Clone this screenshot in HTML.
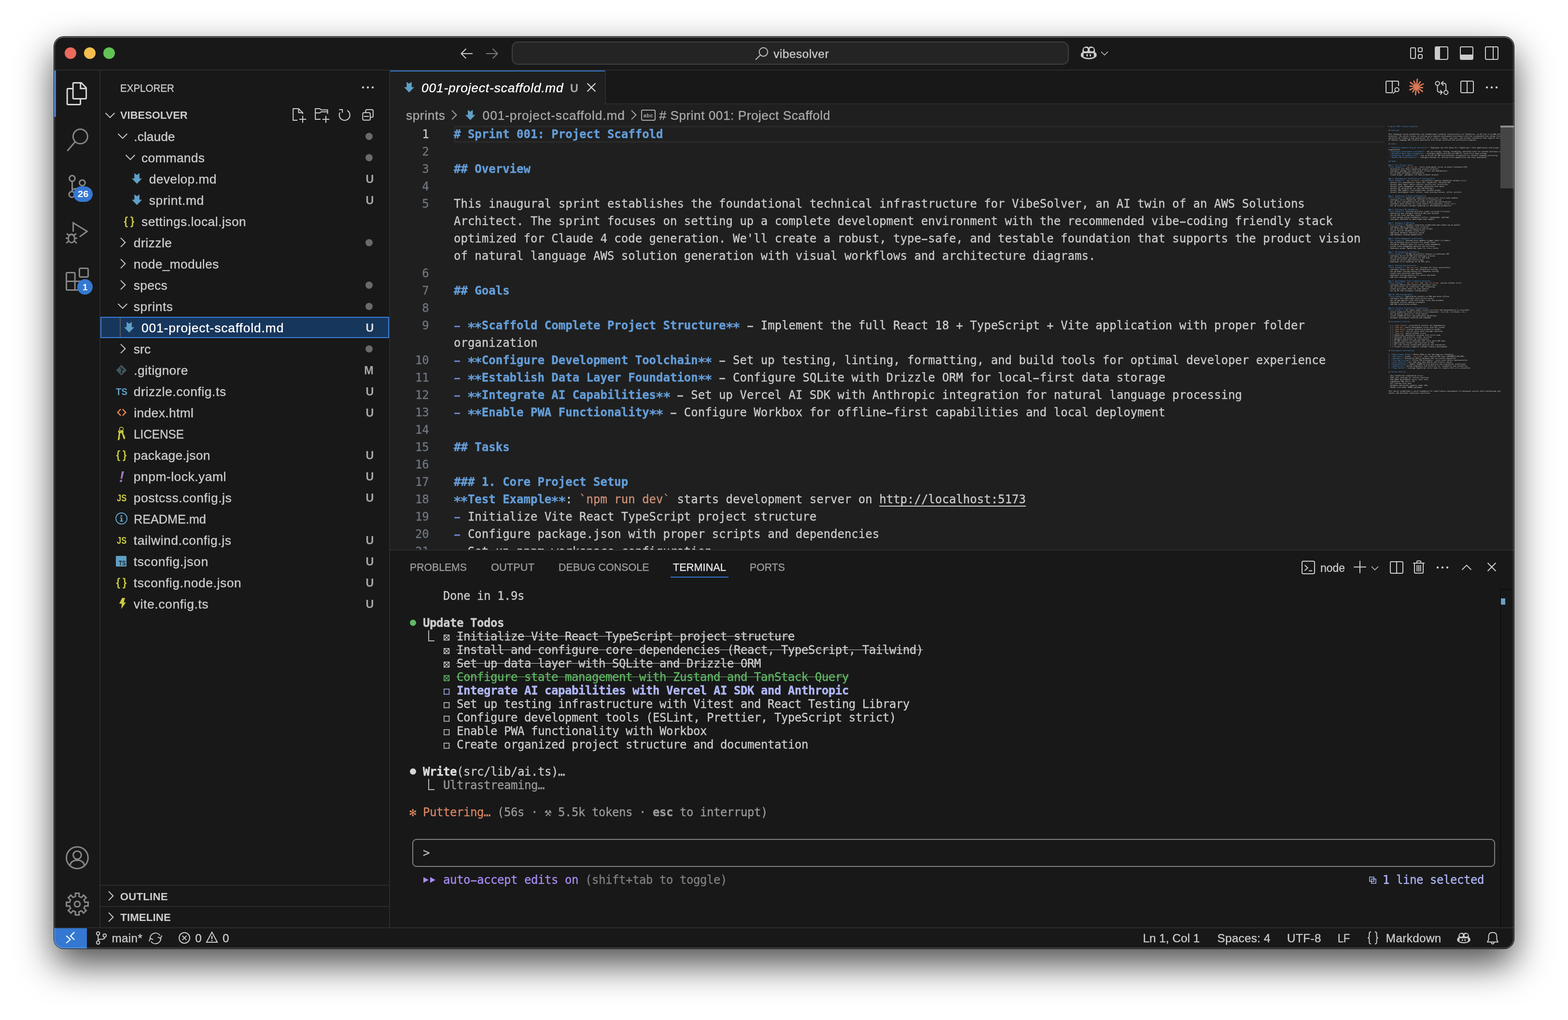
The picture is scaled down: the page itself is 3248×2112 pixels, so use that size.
<!DOCTYPE html>
<html lang="en"><head><meta charset="utf-8"><title>001-project-scaffold.md — vibesolver</title>
<style>
html,body{margin:0;padding:0;background:#fff;}
body{width:3248px;height:2112px;position:relative;overflow:hidden;}
#shadow{position:absolute;left:112px;top:76px;width:3024px;height:1888px;border-radius:20px;
  box-shadow:0 0 0 1px rgba(0,0,0,.95), 0 32px 76px 0 rgba(0,0,0,.71);}
#win{position:absolute;left:112px;top:76px;width:3024px;height:1888px;border-radius:20px;overflow:hidden;background:#181818;}
#abs{position:absolute;left:-112px;top:-76px;width:3248px;height:2112px;will-change:transform;}
#abs div,#abs span,#abs svg,#abs pre{position:absolute;}
#abs span{white-space:pre;}
#abs .rel, #abs .rel span{position:static;}
#rim{position:absolute;left:112px;top:76px;width:3024px;height:1888px;border-radius:20px;box-shadow:inset 0 0 0 2px rgba(255,255,255,.21), inset 0 2px 0 0 rgba(255,255,255,.14);pointer-events:none;}
svg{overflow:visible;}
i.hy{font-style:normal;display:inline-block;transform:scale(1.85,1.1);}
i.as{font-style:normal;display:inline-block;transform:translateY(5px) scale(1.18);-webkit-text-stroke:0.1px;}
</style></head>
<body>
<div id="shadow"></div>
<div id="win"><div id="abs">
<div style="left:112px;top:76px;width:3024px;height:1888px;background:#181818;"></div>
<div style="left:112px;top:144px;width:3024px;height:2px;background:#2b2b2b;"></div>
<div style="left:206px;top:146px;width:2px;height:1774px;background:#2b2b2b;"></div>
<div style="left:806px;top:146px;width:2px;height:1774px;background:#2b2b2b;"></div>
<div style="left:808px;top:216px;width:2328px;height:922px;background:#1f1f1f;"></div>
<div style="left:808px;top:214px;width:2328px;height:2px;background:#2b2b2b;"></div>
<div style="left:808px;top:146px;width:445px;height:70px;background:#1f1f1f;"></div>
<div style="left:808px;top:146px;width:445px;height:2px;background:#3578d2;"></div>
<div style="left:1253px;top:146px;width:2px;height:70px;background:#2b2b2b;"></div>
<div style="left:808px;top:1138px;width:2328px;height:2px;background:#2b2b2b;"></div>
<div style="left:112px;top:1920px;width:3024px;height:2px;background:#2b2b2b;"></div>
<div style="left:134px;top:98px;width:24px;height:24px;border-radius:50%;background:#ed6a5e;"></div>
<div style="left:174px;top:98px;width:24px;height:24px;border-radius:50%;background:#f5bf4f;"></div>
<div style="left:214px;top:98px;width:24px;height:24px;border-radius:50%;background:#61c554;"></div>
<svg style="left:951px;top:95px;" width="32" height="32" viewBox="0 0 16 16"><path d="M14 8 H2.4 M7.2 3 L2.2 8 L7.2 13" fill="none" stroke="#cccccc" stroke-width="1.05" stroke-linecap="butt" stroke-linejoin="miter" /></svg>
<svg style="left:1002.5px;top:95px;" width="32" height="32" viewBox="0 0 16 16"><path d="M2 8 H13.6 M8.8 3 L13.8 8 L8.8 13" fill="none" stroke="#7a7a7a" stroke-width="1.05" stroke-linecap="butt" stroke-linejoin="miter" /></svg>
<div style="left:1060px;top:86px;width:1154px;height:48px;box-sizing:border-box;border:2px solid #404040;border-radius:13px;background:#242424;"></div>
<svg style="left:1562px;top:95px;" width="32" height="32" viewBox="0 0 16 16"><circle cx="9.7" cy="6.3" r="4.4" fill="none" stroke="#c0c0c0" stroke-width="1" stroke-linecap="butt" stroke-linejoin="miter" /><path d="M6.6 9.4 L1.6 14.4" fill="none" stroke="#c0c0c0" stroke-width="1" stroke-linecap="butt" stroke-linejoin="miter" /></svg>
<span style="left:1602.30px;top:87.71px;font-family:'Liberation Sans',sans-serif;font-size:24.29px;line-height:48.58px;color:#cccccc;letter-spacing:0.569px;-webkit-text-stroke:0.35px currentColor;">vibesolver</span>
<svg style="left:2236.3px;top:90.2px;" width="38.4" height="38.4" viewBox="0 0 16 16"><path d="M1.2 9.5 Q1.2 8 2.6 7.6 Q2.2 3.2 5.4 2.7 Q7.6 2.4 8 4 Q8.4 2.4 10.6 2.7 Q13.8 3.2 13.4 7.6 Q14.8 8 14.8 9.5 V11 Q12.5 13.6 8 13.6 Q3.5 13.6 1.2 11 Z" fill="#cccccc"/><rect x="3.7" y="3.9" width="3.4" height="2.9" rx="1.2" fill="#181818"/><rect x="8.9" y="3.9" width="3.4" height="2.9" rx="1.2" fill="#181818"/><path d="M3.6 8.4 H12.4 V11.6 Q10.5 12.5 8 12.5 Q5.5 12.5 3.6 11.6 Z" fill="#181818"/><rect x="6" y="9.2" width="1.2" height="2.1" rx="0.6" fill="#cccccc"/><rect x="8.8" y="9.2" width="1.2" height="2.1" rx="0.6" fill="#cccccc"/></svg>
<svg style="left:2275.6px;top:98.2px;" width="24" height="24" viewBox="0 0 16 16"><polyline points="3.3,6 8,10.7 12.7,6" fill="none" stroke="#cccccc" stroke-width="1.0" stroke-linecap="butt" stroke-linejoin="miter" /></svg>
<svg style="left:2919px;top:94px;" width="32" height="32" viewBox="0 0 16 16"><rect x="1.5" y="2.5" width="5" height="11" rx="1" fill="none" stroke="#cccccc" stroke-width="1" stroke-linecap="butt" stroke-linejoin="miter" /><rect x="9.5" y="2.5" width="4" height="4" rx="1" fill="none" stroke="#cccccc" stroke-width="1" stroke-linecap="butt" stroke-linejoin="miter" /><rect x="9.5" y="9.5" width="4" height="4" rx="1" fill="none" stroke="#cccccc" stroke-width="1" stroke-linecap="butt" stroke-linejoin="miter" /></svg>
<svg style="left:2970px;top:94px;" width="32" height="32" viewBox="0 0 16 16"><rect x="1.5" y="1.5" width="13" height="13" rx="1.2" fill="none" stroke="#cccccc" stroke-width="1" stroke-linecap="butt" stroke-linejoin="miter" /><path d="M1.5 2.5 Q1.5 1.5 2.5 1.5 H6.5 V14.5 H2.5 Q1.5 14.5 1.5 13.5 Z" fill="#cccccc"/></svg>
<svg style="left:3022px;top:94px;" width="32" height="32" viewBox="0 0 16 16"><rect x="1.5" y="1.5" width="13" height="13" rx="1.2" fill="none" stroke="#cccccc" stroke-width="1" stroke-linecap="butt" stroke-linejoin="miter" /><path d="M1.5 9.5 H14.5 V13.5 Q14.5 14.5 13.5 14.5 H2.5 Q1.5 14.5 1.5 13.5 Z" fill="#cccccc"/></svg>
<svg style="left:3074px;top:94px;" width="32" height="32" viewBox="0 0 16 16"><rect x="1.5" y="1.5" width="13" height="13" rx="1.2" fill="none" stroke="#cccccc" stroke-width="1" stroke-linecap="butt" stroke-linejoin="miter" /><path d="M9.5 1.5 V14.5" fill="none" stroke="#cccccc" stroke-width="1" stroke-linecap="butt" stroke-linejoin="miter" /></svg>
<div style="left:112px;top:146px;width:4px;height:96px;background:#3578d2;"></div>
<svg style="left:136px;top:170px;" width="48" height="48" viewBox="0 0 24 24"><path d="M7.6 6.8 H2.6 Q1.6 6.8 1.6 7.8 V22.3 Q1.6 23.3 2.6 23.3 H14.3 Q15.3 23.3 15.3 22.3 V17.3" fill="none" stroke="#d7d7d7" stroke-width="1.5" stroke-linecap="butt" stroke-linejoin="miter" /><path d="M8.6 0.75 H16.2 L21.3 5.9 V16.3 Q21.3 17.3 20.3 17.3 H8.6 Q7.6 17.3 7.6 16.3 V1.75 Q7.6 0.75 8.6 0.75 Z" fill="none" stroke="#d7d7d7" stroke-width="1.5" stroke-linecap="butt" stroke-linejoin="miter"  stroke-linejoin="round"/><path d="M15.4 0.9 V6.6 H21.2" fill="none" stroke="#d7d7d7" stroke-width="1.5" stroke-linecap="butt" stroke-linejoin="miter" /></svg>
<svg style="left:136px;top:266px;" width="48" height="48" viewBox="0 0 24 24"><circle cx="15.2" cy="8.3" r="7.5" fill="none" stroke="#868686" stroke-width="1.5" stroke-linecap="butt" stroke-linejoin="miter" /><path d="M10 13.6 L1.7 23.2" fill="none" stroke="#868686" stroke-width="1.5" stroke-linecap="butt" stroke-linejoin="miter" /></svg>
<svg style="left:136px;top:362px;" width="48" height="48" viewBox="0 0 24 24"><circle cx="6.75" cy="3.75" r="2.95" fill="none" stroke="#868686" stroke-width="1.5" stroke-linecap="butt" stroke-linejoin="miter" /><circle cx="17.2" cy="8.3" r="2.95" fill="none" stroke="#868686" stroke-width="1.5" stroke-linecap="butt" stroke-linejoin="miter" /><circle cx="6.4" cy="20.3" r="2.95" fill="none" stroke="#868686" stroke-width="1.5" stroke-linecap="butt" stroke-linejoin="miter" /><path d="M6.75 6.7 V17.4 M17.2 11.25 Q17.2 14.4 13.5 14.4 H10 Q6.75 14.4 6.75 17.4" fill="none" stroke="#868686" stroke-width="1.5" stroke-linecap="butt" stroke-linejoin="miter" /></svg>
<svg style="left:136px;top:458px;" width="48" height="48" viewBox="0 0 24 24"><path d="M7.8 10.9 V1.7 L22.2 10.5 L14.4 16.2" fill="none" stroke="#868686" stroke-width="1.5" stroke-linecap="butt" stroke-linejoin="miter" /><ellipse cx="6" cy="18" rx="3.3" ry="4.2" fill="none" stroke="#868686" stroke-width="1.5" stroke-linecap="butt" stroke-linejoin="miter" /><path d="M3 14.6 Q6 12.4 9 14.6" fill="none" stroke="#868686" stroke-width="1.5" stroke-linecap="butt" stroke-linejoin="miter" /><path d="M2.7 17.6 H0 M9.3 17.6 H12 M3.1 20.6 L0.6 22.8 M8.9 20.6 L11.4 22.8 M3.3 14.6 L1 12.8 M8.7 14.6 L11 12.8" fill="none" stroke="#868686" stroke-width="1.5" stroke-linecap="butt" stroke-linejoin="miter" /></svg>
<svg style="left:136px;top:554px;" width="48" height="48" viewBox="0 0 24 24"><path d="M0.75 6.2 Q0.75 5.2 1.75 5.2 H8.6 Q9.6 5.2 9.6 6.2 V14.2 H18.5 Q19.5 14.2 19.5 15.2 V22.2 Q19.5 23.2 18.5 23.2 H1.75 Q0.75 23.2 0.75 22.2 Z" fill="none" stroke="#868686" stroke-width="1.5" stroke-linecap="butt" stroke-linejoin="miter" /><path d="M0.75 14.2 H9.6 V23.2" fill="none" stroke="#868686" stroke-width="1.5" stroke-linecap="butt" stroke-linejoin="miter" /><rect x="14.25" y="0.75" width="9.05" height="9.05" rx="1.3" fill="none" stroke="#868686" stroke-width="1.5" stroke-linecap="butt" stroke-linejoin="miter" /></svg>
<svg style="left:136px;top:1752px;" width="48" height="48" viewBox="0 0 24 24"><circle cx="12" cy="12" r="11.2" fill="none" stroke="#868686" stroke-width="1.5" stroke-linecap="butt" stroke-linejoin="miter" /><circle cx="12" cy="9.3" r="4.2" fill="none" stroke="#868686" stroke-width="1.5" stroke-linecap="butt" stroke-linejoin="miter" /><path d="M4.6 19.8 Q5.6 14.6 12 14.6 Q18.4 14.6 19.4 19.8" fill="none" stroke="#868686" stroke-width="1.5" stroke-linecap="butt" stroke-linejoin="miter" /></svg>
<svg style="left:136px;top:1848px;" width="48" height="48" viewBox="0 0 24 24"><path d="M10.07 0.76 L13.93 0.76 L13.83 4.01 L16.36 5.05 L18.58 2.69 L21.31 5.42 L18.95 7.64 L19.99 10.17 L23.24 10.07 L23.24 13.93 L19.99 13.83 L18.95 16.36 L21.31 18.58 L18.58 21.31 L16.36 18.95 L13.83 19.99 L13.93 23.24 L10.07 23.24 L10.17 19.99 L7.64 18.95 L5.42 21.31 L2.69 18.58 L5.05 16.36 L4.01 13.83 L0.76 13.93 L0.76 10.07 L4.01 10.17 L5.05 7.64 L2.69 5.42 L5.42 2.69 L7.64 5.05 L10.17 4.01 Z" fill="none" stroke="#868686" stroke-width="1.5" stroke-linecap="butt" stroke-linejoin="miter"  stroke-linejoin="round"/><circle cx="12" cy="12" r="2.9" fill="none" stroke="#868686" stroke-width="1.5" stroke-linecap="butt" stroke-linejoin="miter" /></svg>
<div style="left:152px;top:386px;width:40px;height:32px;border-radius:16px;background:#3578d2;"></div>
<span style="left:160.90px;top:384.30px;font-family:'Liberation Sans',sans-serif;font-size:18.4px;line-height:36.8px;color:#ffffff;font-weight:bold;transform-origin:0 0;transform:scaleX(1.0911);">26</span>
<div style="left:160px;top:578px;width:32px;height:32px;border-radius:16px;background:#3578d2;"></div>
<span style="left:171.20px;top:576.50px;font-family:'Liberation Sans',sans-serif;font-size:18.4px;line-height:36.8px;color:#ffffff;font-weight:bold;">1</span>
<span style="left:249.10px;top:160.64px;font-family:'Liberation Sans',sans-serif;font-size:22.26px;line-height:44.52px;color:#cccccc;transform-origin:0 0;transform:scaleX(0.9229);-webkit-text-stroke:0.35px currentColor;">EXPLORER</span>
<svg style="left:746px;top:165px;" width="32" height="32" viewBox="0 0 16 16"><circle cx="3" cy="8" r="1.1" fill="#cccccc"/><circle cx="8" cy="8" r="1.1" fill="#cccccc"/><circle cx="13" cy="8" r="1.1" fill="#cccccc"/></svg>
<svg style="left:212px;top:222px;" width="32" height="32" viewBox="0 0 16 16"><polyline points="3.3,6 8,10.7 12.7,6" fill="none" stroke="#cccccc" stroke-width="1" stroke-linecap="butt" stroke-linejoin="miter" /></svg>
<span style="left:249.10px;top:217.34px;font-family:'Liberation Sans',sans-serif;font-size:22.26px;line-height:44.52px;color:#cccccc;font-weight:bold;transform-origin:0 0;transform:scaleX(0.9851);">VIBESOLVER</span>
<svg style="left:604px;top:222px;" width="32" height="32" viewBox="0 0 16 16"><path d="M6 13.5 H1.6 V1.5 H7.25 L11.5 5.65 V7" fill="none" stroke="#cccccc" stroke-width="1" stroke-linecap="butt" stroke-linejoin="miter"  stroke-linejoin="round"/><path d="M7.25 1.5 V5.65 H11.5" fill="none" stroke="#cccccc" stroke-width="1" stroke-linecap="butt" stroke-linejoin="miter" /><path d="M11.5 8.9 V16.1 M7.9 12.5 H15.1" fill="none" stroke="#cccccc" stroke-width="1" stroke-linecap="butt" stroke-linejoin="miter" /></svg>
<svg style="left:650px;top:222px;" width="32" height="32" viewBox="0 0 16 16"><path d="M7 12.5 H1.6 V1.5 H6.3 L7.6 2.8 H14.3 V7" fill="none" stroke="#cccccc" stroke-width="1" stroke-linecap="butt" stroke-linejoin="miter"  stroke-linejoin="round"/><path d="M1.6 5.9 H6.3 L7.6 4.7 H14.3" fill="none" stroke="#cccccc" stroke-width="1" stroke-linecap="butt" stroke-linejoin="miter"  stroke-linejoin="round"/><path d="M12.5 8.9 V16.1 M8.9 12.5 H16.1" fill="none" stroke="#cccccc" stroke-width="1" stroke-linecap="butt" stroke-linejoin="miter" /></svg>
<svg style="left:698px;top:222px;" width="32" height="32" viewBox="0 0 16 16"><path d="M10.65 3.34 A5.5 5.5 0 1 1 3.14 5.35" fill="none" stroke="#cccccc" stroke-width="1" stroke-linecap="butt" stroke-linejoin="miter" /><path d="M2.2 2.5 H5.6 V5.8" fill="none" stroke="#cccccc" stroke-width="1" stroke-linecap="butt" stroke-linejoin="miter" /></svg>
<svg style="left:746px;top:222px;" width="32" height="32" viewBox="0 0 16 16"><rect x="5.7" y="2.5" width="7.75" height="7.9" rx="1.3" fill="none" stroke="#cccccc" stroke-width="1" stroke-linecap="butt" stroke-linejoin="miter" /><rect x="2.7" y="5.65" width="7.75" height="7.75" rx="1.3" fill="#181818" stroke="#cccccc" stroke-width="1"/><path d="M4 9.5 H9.1" fill="none" stroke="#cccccc" stroke-width="1" stroke-linecap="butt" stroke-linejoin="miter" /></svg>
<svg style="left:238px;top:265px;" width="32" height="32" viewBox="0 0 16 16"><polyline points="3.3,6 8,10.7 12.7,6" fill="none" stroke="#cccccc" stroke-width="1" stroke-linecap="butt" stroke-linejoin="miter" /></svg>
<span style="left:277.30px;top:257.49px;font-family:'Liberation Sans',sans-serif;font-size:26.31px;line-height:52.62px;color:#cccccc;letter-spacing:0.065px;-webkit-text-stroke:0.35px currentColor;">.claude</span>
<div style="left:756.5px;top:274.5px;width:15px;height:15px;border-radius:50%;background:#6a6a6a;"></div>
<svg style="left:254px;top:309px;" width="32" height="32" viewBox="0 0 16 16"><polyline points="3.3,6 8,10.7 12.7,6" fill="none" stroke="#cccccc" stroke-width="1" stroke-linecap="butt" stroke-linejoin="miter" /></svg>
<span style="left:293.00px;top:301.49px;font-family:'Liberation Sans',sans-serif;font-size:26.31px;line-height:52.62px;color:#cccccc;letter-spacing:0.330px;-webkit-text-stroke:0.35px currentColor;">commands</span>
<div style="left:756.5px;top:318.5px;width:15px;height:15px;border-radius:50%;background:#6a6a6a;"></div>
<svg style="left:272.9px;top:358.2px;" width="21.2" height="23" viewBox="0 0 22 23"><path d="M5.5 0 L11 4 L16.5 0 V11.5 H22 L11 23 L0 11.5 H5.5 Z" fill="#5f9fc6"/></svg>
<span style="left:308.80px;top:345.49px;font-family:'Liberation Sans',sans-serif;font-size:26.31px;line-height:52.62px;color:#cccccc;letter-spacing:0.389px;-webkit-text-stroke:0.35px currentColor;">develop.md</span>
<span style="left:757.60px;top:348.30px;font-family:'Liberation Sans',sans-serif;font-size:23.4px;line-height:46.8px;color:#a8a8a8;font-weight:bold;">U</span>
<svg style="left:272.9px;top:402.2px;" width="21.2" height="23" viewBox="0 0 22 23"><path d="M5.5 0 L11 4 L16.5 0 V11.5 H22 L11 23 L0 11.5 H5.5 Z" fill="#5f9fc6"/></svg>
<span style="left:308.80px;top:389.49px;font-family:'Liberation Sans',sans-serif;font-size:26.31px;line-height:52.62px;color:#cccccc;letter-spacing:0.664px;-webkit-text-stroke:0.35px currentColor;">sprint.md</span>
<span style="left:757.60px;top:392.30px;font-family:'Liberation Sans',sans-serif;font-size:23.4px;line-height:46.8px;color:#a8a8a8;font-weight:bold;">U</span>
<span style="left:257.00px;top:434.90px;font-family:'Liberation Sans',sans-serif;font-size:22.5px;line-height:45.0px;color:#cbcb41;-webkit-text-stroke:0.9px currentColor;">{</span>
<span style="left:270.40px;top:434.90px;font-family:'Liberation Sans',sans-serif;font-size:22.5px;line-height:45.0px;color:#cbcb41;-webkit-text-stroke:0.9px currentColor;">}</span>
<span style="left:293.00px;top:433.49px;font-family:'Liberation Sans',sans-serif;font-size:26.31px;line-height:52.62px;color:#cccccc;letter-spacing:0.506px;-webkit-text-stroke:0.35px currentColor;">settings.local.json</span>
<svg style="left:238px;top:486px;" width="32" height="32" viewBox="0 0 16 16"><polyline points="6,3.3 10.7,8 6,12.7" fill="none" stroke="#cccccc" stroke-width="1" stroke-linecap="butt" stroke-linejoin="miter" /></svg>
<span style="left:276.80px;top:477.49px;font-family:'Liberation Sans',sans-serif;font-size:26.31px;line-height:52.62px;color:#cccccc;letter-spacing:0.533px;-webkit-text-stroke:0.35px currentColor;">drizzle</span>
<div style="left:756.5px;top:494.5px;width:15px;height:15px;border-radius:50%;background:#6a6a6a;"></div>
<svg style="left:238px;top:530px;" width="32" height="32" viewBox="0 0 16 16"><polyline points="6,3.3 10.7,8 6,12.7" fill="none" stroke="#cccccc" stroke-width="1" stroke-linecap="butt" stroke-linejoin="miter" /></svg>
<span style="left:276.80px;top:521.49px;font-family:'Liberation Sans',sans-serif;font-size:26.31px;line-height:52.62px;color:#cccccc;letter-spacing:0.352px;-webkit-text-stroke:0.35px currentColor;">node_modules</span>
<svg style="left:238px;top:574px;" width="32" height="32" viewBox="0 0 16 16"><polyline points="6,3.3 10.7,8 6,12.7" fill="none" stroke="#cccccc" stroke-width="1" stroke-linecap="butt" stroke-linejoin="miter" /></svg>
<span style="left:276.80px;top:565.49px;font-family:'Liberation Sans',sans-serif;font-size:26.31px;line-height:52.62px;color:#cccccc;letter-spacing:0.288px;-webkit-text-stroke:0.35px currentColor;">specs</span>
<div style="left:756.5px;top:582.5px;width:15px;height:15px;border-radius:50%;background:#6a6a6a;"></div>
<svg style="left:238px;top:617px;" width="32" height="32" viewBox="0 0 16 16"><polyline points="3.3,6 8,10.7 12.7,6" fill="none" stroke="#cccccc" stroke-width="1" stroke-linecap="butt" stroke-linejoin="miter" /></svg>
<span style="left:276.80px;top:609.49px;font-family:'Liberation Sans',sans-serif;font-size:26.31px;line-height:52.62px;color:#cccccc;letter-spacing:0.617px;-webkit-text-stroke:0.35px currentColor;">sprints</span>
<div style="left:756.5px;top:626.5px;width:15px;height:15px;border-radius:50%;background:#6a6a6a;"></div>
<div style="left:208px;top:656px;width:598px;height:44px;box-sizing:border-box;background:#17365c;border:2px solid #3a7edb;"></div>
<div style="left:248px;top:658px;width:2px;height:40px;background:#5a5a5a;"></div>
<svg style="left:257.1px;top:666.2px;" width="21.2" height="23" viewBox="0 0 22 23"><path d="M5.5 0 L11 4 L16.5 0 V11.5 H22 L11 23 L0 11.5 H5.5 Z" fill="#5f9fc6"/></svg>
<span style="left:293.00px;top:653.49px;font-family:'Liberation Sans',sans-serif;font-size:26.31px;line-height:52.62px;color:#ffffff;letter-spacing:0.907px;-webkit-text-stroke:0.35px currentColor;">001-project-scaffold.md</span>
<span style="left:757.60px;top:656.30px;font-family:'Liberation Sans',sans-serif;font-size:23.4px;line-height:46.8px;color:#dcdcdc;font-weight:bold;">U</span>
<svg style="left:238px;top:706px;" width="32" height="32" viewBox="0 0 16 16"><polyline points="6,3.3 10.7,8 6,12.7" fill="none" stroke="#cccccc" stroke-width="1" stroke-linecap="butt" stroke-linejoin="miter" /></svg>
<span style="left:276.80px;top:697.49px;font-family:'Liberation Sans',sans-serif;font-size:26.31px;line-height:52.62px;color:#cccccc;letter-spacing:0.119px;-webkit-text-stroke:0.35px currentColor;">src</span>
<div style="left:756.5px;top:714.5px;width:15px;height:15px;border-radius:50%;background:#6a6a6a;"></div>
<svg style="left:240.2px;top:754.6px;" width="23" height="23" viewBox="0 0 23 23"><path d="M11.5 0.4 L22.6 11.5 L11.5 22.6 L0.4 11.5 Z" fill="#415560"/><path d="M9.4 5.6 L14 10.2 M11.6 7.8 V16.4" fill="none" stroke="#181818" stroke-width="1.5"/><circle cx="11.6" cy="16.6" r="1.7" fill="#181818"/><circle cx="14.4" cy="10.6" r="1.7" fill="#181818"/></svg>
<span style="left:277.30px;top:741.49px;font-family:'Liberation Sans',sans-serif;font-size:26.31px;line-height:52.62px;color:#cccccc;letter-spacing:0.439px;-webkit-text-stroke:0.35px currentColor;">.gitignore</span>
<span style="left:754.30px;top:744.30px;font-family:'Liberation Sans',sans-serif;font-size:23.4px;line-height:46.8px;color:#a8a8a8;font-weight:bold;">M</span>
<span style="left:239.50px;top:789.50px;font-family:'Liberation Sans',sans-serif;font-size:21px;line-height:42px;color:#5f9fc6;font-weight:bold;transform-origin:0 0;transform:scaleX(0.8914);">TS</span>
<span style="left:276.80px;top:785.49px;font-family:'Liberation Sans',sans-serif;font-size:26.31px;line-height:52.62px;color:#cccccc;letter-spacing:0.630px;-webkit-text-stroke:0.35px currentColor;">drizzle.config.ts</span>
<span style="left:757.60px;top:788.30px;font-family:'Liberation Sans',sans-serif;font-size:23.4px;line-height:46.8px;color:#a8a8a8;font-weight:bold;">U</span>
<svg style="left:241.6px;top:846px;" width="20" height="16" viewBox="0 0 20 16"><path d="M8.2 1.2 L1.7 7.9 L8.2 14.6 M11.8 1.2 L18.3 7.9 L11.8 14.6" fill="none" stroke="#e0804a" stroke-width="2.6"/></svg>
<span style="left:277.30px;top:829.49px;font-family:'Liberation Sans',sans-serif;font-size:26.31px;line-height:52.62px;color:#cccccc;letter-spacing:0.407px;-webkit-text-stroke:0.35px currentColor;">index.html</span>
<span style="left:757.60px;top:832.30px;font-family:'Liberation Sans',sans-serif;font-size:23.4px;line-height:46.8px;color:#a8a8a8;font-weight:bold;">U</span>
<svg style="left:242.7px;top:883px;" width="18" height="30" viewBox="0 0 18 30"><circle cx="8.4" cy="5.4" r="3.9" fill="none" stroke="#cbcb41" stroke-width="1.5"/><path d="M5.4 9.6 L2.6 27 M9.8 10.4 L14.4 24.8" fill="none" stroke="#cbcb41" stroke-width="3.2" stroke-linecap="round"/><circle cx="5.2" cy="10.4" r="3.5" fill="#cbcb41"/><circle cx="9.8" cy="10.8" r="3.1" fill="#cbcb41"/><circle cx="5.4" cy="9.2" r="1" fill="#181818"/><path d="M3 24.2 L6 25 M13 20.6 L15.8 19.6 M13.8 23.4 L16.4 22.4" fill="none" stroke="#cbcb41" stroke-width="1.4"/></svg>
<span style="left:277.40px;top:873.49px;font-family:'Liberation Sans',sans-serif;font-size:26.31px;line-height:52.62px;color:#cccccc;transform-origin:0 0;transform:scaleX(0.9239);-webkit-text-stroke:0.35px currentColor;">LICENSE</span>
<span style="left:241.00px;top:918.90px;font-family:'Liberation Sans',sans-serif;font-size:22.5px;line-height:45.0px;color:#cbcb41;-webkit-text-stroke:0.9px currentColor;">{</span>
<span style="left:254.40px;top:918.90px;font-family:'Liberation Sans',sans-serif;font-size:22.5px;line-height:45.0px;color:#cbcb41;-webkit-text-stroke:0.9px currentColor;">}</span>
<span style="left:276.80px;top:917.49px;font-family:'Liberation Sans',sans-serif;font-size:26.31px;line-height:52.62px;color:#cccccc;letter-spacing:0.322px;-webkit-text-stroke:0.35px currentColor;">package.json</span>
<span style="left:757.60px;top:920.30px;font-family:'Liberation Sans',sans-serif;font-size:23.4px;line-height:46.8px;color:#a8a8a8;font-weight:bold;">U</span>
<span style="left:246.70px;top:955.00px;font-family:'Liberation Sans',sans-serif;font-size:32px;line-height:64px;color:#a074c4;font-weight:bold;font-style:italic;">!</span>
<span style="left:276.80px;top:961.49px;font-family:'Liberation Sans',sans-serif;font-size:26.31px;line-height:52.62px;color:#cccccc;letter-spacing:0.570px;-webkit-text-stroke:0.35px currentColor;">pnpm-lock.yaml</span>
<span style="left:757.60px;top:964.30px;font-family:'Liberation Sans',sans-serif;font-size:23.4px;line-height:46.8px;color:#a8a8a8;font-weight:bold;">U</span>
<span style="left:241.60px;top:1010.00px;font-family:'Liberation Sans',sans-serif;font-size:20.5px;line-height:41.0px;color:#cbcb41;font-weight:bold;transform-origin:0 0;transform:scaleX(0.8020);">JS</span>
<span style="left:276.80px;top:1005.49px;font-family:'Liberation Sans',sans-serif;font-size:26.31px;line-height:52.62px;color:#cccccc;letter-spacing:0.625px;-webkit-text-stroke:0.35px currentColor;">postcss.config.js</span>
<span style="left:757.60px;top:1008.30px;font-family:'Liberation Sans',sans-serif;font-size:23.4px;line-height:46.8px;color:#a8a8a8;font-weight:bold;">U</span>
<svg style="left:239px;top:1061.2px;" width="25.2" height="25.2" viewBox="0 0 25.2 25.2"><circle cx="12.6" cy="12.6" r="11.5" fill="none" stroke="#5f9fc6" stroke-width="2"/><circle cx="12.4" cy="7.4" r="1.9" fill="#5f9fc6"/><path d="M9.4 10.8 H14.2 V17.2 H16.2 V19 H9.2 V17.2 H11.4 V12.6 H9.4 Z" fill="#5f9fc6"/></svg>
<span style="left:277.40px;top:1049.49px;font-family:'Liberation Sans',sans-serif;font-size:26.31px;line-height:52.62px;color:#cccccc;transform-origin:0 0;transform:scaleX(0.9582);-webkit-text-stroke:0.35px currentColor;">README.md</span>
<span style="left:241.60px;top:1098.00px;font-family:'Liberation Sans',sans-serif;font-size:20.5px;line-height:41.0px;color:#cbcb41;font-weight:bold;transform-origin:0 0;transform:scaleX(0.8020);">JS</span>
<span style="left:276.80px;top:1093.49px;font-family:'Liberation Sans',sans-serif;font-size:26.31px;line-height:52.62px;color:#cccccc;letter-spacing:0.626px;-webkit-text-stroke:0.35px currentColor;">tailwind.config.js</span>
<span style="left:757.60px;top:1096.30px;font-family:'Liberation Sans',sans-serif;font-size:23.4px;line-height:46.8px;color:#a8a8a8;font-weight:bold;">U</span>
<div style="left:240.4px;top:1150.7px;width:22.1px;height:22.1px;background:#5f9fc6;border-radius:1.5px;"></div>
<span style="left:245.80px;top:1152.00px;font-family:'Liberation Sans',sans-serif;font-size:14.2px;line-height:28.4px;color:#1c2730;font-weight:bold;transform-origin:0 0;transform:scaleX(0.8055);">TS</span>
<span style="left:276.80px;top:1137.49px;font-family:'Liberation Sans',sans-serif;font-size:26.31px;line-height:52.62px;color:#cccccc;letter-spacing:0.671px;-webkit-text-stroke:0.35px currentColor;">tsconfig.json</span>
<span style="left:757.60px;top:1140.30px;font-family:'Liberation Sans',sans-serif;font-size:23.4px;line-height:46.8px;color:#a8a8a8;font-weight:bold;">U</span>
<span style="left:241.00px;top:1182.90px;font-family:'Liberation Sans',sans-serif;font-size:22.5px;line-height:45.0px;color:#cbcb41;-webkit-text-stroke:0.9px currentColor;">{</span>
<span style="left:254.40px;top:1182.90px;font-family:'Liberation Sans',sans-serif;font-size:22.5px;line-height:45.0px;color:#cbcb41;-webkit-text-stroke:0.9px currentColor;">}</span>
<span style="left:276.80px;top:1181.49px;font-family:'Liberation Sans',sans-serif;font-size:26.31px;line-height:52.62px;color:#cccccc;letter-spacing:0.638px;-webkit-text-stroke:0.35px currentColor;">tsconfig.node.json</span>
<span style="left:757.60px;top:1184.30px;font-family:'Liberation Sans',sans-serif;font-size:23.4px;line-height:46.8px;color:#a8a8a8;font-weight:bold;">U</span>
<svg style="left:246.7px;top:1237.5px;" width="13.6" height="23" viewBox="0 0 13.6 23"><path d="M6 0 L12 0 L9.4 9.4 L13.6 9.4 L4.3 23 L5.1 12 L0 12 Z" fill="#cbcb41"/></svg>
<span style="left:276.80px;top:1225.49px;font-family:'Liberation Sans',sans-serif;font-size:26.31px;line-height:52.62px;color:#cccccc;letter-spacing:0.658px;-webkit-text-stroke:0.35px currentColor;">vite.config.ts</span>
<span style="left:757.60px;top:1228.30px;font-family:'Liberation Sans',sans-serif;font-size:23.4px;line-height:46.8px;color:#a8a8a8;font-weight:bold;">U</span>
<div style="left:208px;top:1832px;width:598px;height:2px;background:#2b2b2b;"></div>
<svg style="left:212.5px;top:1839px;" width="32" height="32" viewBox="0 0 16 16"><polyline points="6,3.3 10.7,8 6,12.7" fill="none" stroke="#cccccc" stroke-width="1" stroke-linecap="butt" stroke-linejoin="miter" /></svg>
<span style="left:248.70px;top:1834.64px;font-family:'Liberation Sans',sans-serif;font-size:22.26px;line-height:44.52px;color:#cccccc;font-weight:bold;letter-spacing:0.202px;">OUTLINE</span>
<div style="left:208px;top:1876px;width:598px;height:2px;background:#2b2b2b;"></div>
<svg style="left:212.5px;top:1883px;" width="32" height="32" viewBox="0 0 16 16"><polyline points="6,3.3 10.7,8 6,12.7" fill="none" stroke="#cccccc" stroke-width="1" stroke-linecap="butt" stroke-linejoin="miter" /></svg>
<span style="left:249.20px;top:1878.24px;font-family:'Liberation Sans',sans-serif;font-size:22.26px;line-height:44.52px;color:#cccccc;font-weight:bold;letter-spacing:0.104px;">TIMELINE</span>
<svg style="left:836.8px;top:169.2px;" width="21" height="22.8" viewBox="0 0 22 23"><path d="M5.5 0 L11 4 L16.5 0 V11.5 H22 L11 23 L0 11.5 H5.5 Z" fill="#5f9fc6"/></svg>
<span style="left:873.00px;top:156.09px;font-family:'Liberation Sans',sans-serif;font-size:26.31px;line-height:52.62px;color:#ffffff;font-style:italic;letter-spacing:0.860px;-webkit-text-stroke:0.35px currentColor;">001-project-scaffold.md</span>
<span style="left:1181.10px;top:159.80px;font-family:'Liberation Sans',sans-serif;font-size:23.4px;line-height:46.8px;color:#a8a8a8;font-weight:bold;">U</span>
<svg style="left:1209.2px;top:165.2px;" width="32" height="32" viewBox="0 0 16 16"><path d="M3.8 3.8 L12.2 12.2 M12.2 3.8 L3.8 12.2" fill="none" stroke="#e0e0e0" stroke-width="1.05" stroke-linecap="butt" stroke-linejoin="miter" /></svg>
<svg style="left:2868px;top:163px;" width="32" height="32" viewBox="0 0 16 16"><path d="M14.5 7.5 V3.5 Q14.5 2.5 13.5 2.5 H2.5 Q1.5 2.5 1.5 3.5 V13.5 Q1.5 14.5 2.5 14.5 H8" fill="none" stroke="#cccccc" stroke-width="1" stroke-linecap="butt" stroke-linejoin="miter" /><path d="M8 2.5 V14.5" fill="none" stroke="#cccccc" stroke-width="1" stroke-linecap="butt" stroke-linejoin="miter" /><circle cx="12.8" cy="11.3" r="2.1" fill="none" stroke="#cccccc" stroke-width="1" stroke-linecap="butt" stroke-linejoin="miter" /><path d="M11.3 12.8 L8.8 15.3" fill="none" stroke="#cccccc" stroke-width="1" stroke-linecap="butt" stroke-linejoin="miter" /></svg>
<svg style="left:2917px;top:163px;" width="34" height="34" viewBox="0 0 16 16"><path d="M8 8 L8.91 0.45 M8 8 L11.72 3.04 M8 8 L14.62 5.17 M8 8 L13.96 8.72 M8 8 L13.92 12.44 M8 8 L10.51 13.89 M8 8 L7.09 15.55 M8 8 L4.40 12.80 M8 8 L1.56 10.75 M8 8 L1.65 7.23 M8 8 L2.08 3.56 M8 8 L5.57 2.30" fill="none" stroke="#d97757" stroke-width="1.35" stroke-linecap="round"/><circle cx="8" cy="8" r="2" fill="#d97757"/></svg>
<svg style="left:2970px;top:164.5px;" width="32" height="32" viewBox="0 0 16 16"><circle cx="3.8" cy="3.8" r="2.1" fill="none" stroke="#cccccc" stroke-width="1" stroke-linecap="butt" stroke-linejoin="miter" /><circle cx="12.6" cy="13.2" r="2.1" fill="none" stroke="#cccccc" stroke-width="1" stroke-linecap="butt" stroke-linejoin="miter" /><path d="M3.8 5.9 V10.8 Q3.8 13 6 13 H8.2" fill="none" stroke="#cccccc" stroke-width="1" stroke-linecap="butt" stroke-linejoin="miter" /><path d="M6.6 10.9 L8.8 13.1 L6.6 15.3" fill="none" stroke="#cccccc" stroke-width="1" stroke-linecap="butt" stroke-linejoin="miter" /><path d="M12.6 11.1 V6 Q12.6 3.8 10.4 3.8 H8.4" fill="none" stroke="#cccccc" stroke-width="1" stroke-linecap="butt" stroke-linejoin="miter" /><path d="M10 1.6 L7.8 3.8 L10 6" fill="none" stroke="#cccccc" stroke-width="1" stroke-linecap="butt" stroke-linejoin="miter" /></svg>
<svg style="left:3023px;top:163px;" width="32" height="32" viewBox="0 0 16 16"><rect x="1.5" y="2.5" width="13" height="12" rx="1.2" fill="none" stroke="#cccccc" stroke-width="1" stroke-linecap="butt" stroke-linejoin="miter" /><path d="M8 2.5 V14.5" fill="none" stroke="#cccccc" stroke-width="1" stroke-linecap="butt" stroke-linejoin="miter" /></svg>
<svg style="left:3074px;top:165px;" width="32" height="32" viewBox="0 0 16 16"><circle cx="3" cy="8" r="1.1" fill="#cccccc"/><circle cx="8" cy="8" r="1.1" fill="#cccccc"/><circle cx="13" cy="8" r="1.1" fill="#cccccc"/></svg>
<span style="left:840.90px;top:212.99px;font-family:'Liberation Sans',sans-serif;font-size:26.31px;line-height:52.62px;color:#a9a9a9;letter-spacing:0.600px;-webkit-text-stroke:0.35px currentColor;">sprints</span>
<svg style="left:923.5px;top:222px;" width="32" height="32" viewBox="0 0 16 16"><polyline points="6,3.3 10.7,8 6,12.7" fill="none" stroke="#a9a9a9" stroke-width="1" stroke-linecap="butt" stroke-linejoin="miter" /></svg>
<svg style="left:964.3px;top:227px;" width="20.4" height="22.2" viewBox="0 0 22 23"><path d="M5.5 0 L11 4 L16.5 0 V11.5 H22 L11 23 L0 11.5 H5.5 Z" fill="#5f9fc6"/></svg>
<span style="left:999.60px;top:212.99px;font-family:'Liberation Sans',sans-serif;font-size:26.31px;line-height:52.62px;color:#a9a9a9;letter-spacing:0.912px;-webkit-text-stroke:0.35px currentColor;">001-project-scaffold.md</span>
<svg style="left:1296px;top:222px;" width="32" height="32" viewBox="0 0 16 16"><polyline points="6,3.3 10.7,8 6,12.7" fill="none" stroke="#a9a9a9" stroke-width="1" stroke-linecap="butt" stroke-linejoin="miter" /></svg>
<svg style="left:1327px;top:222px;" width="32" height="32" viewBox="0 0 16 16"><rect x="1" y="3" width="14" height="10.5" rx="1.2" fill="none" stroke="#a9a9a9" stroke-width="1" stroke-linecap="butt" stroke-linejoin="miter" /><text x="8" y="10.6" font-family="Liberation Sans,sans-serif" font-size="5.6" font-weight="bold" text-anchor="middle" fill="#a9a9a9" letter-spacing="0.2">abc</text></svg>
<span style="left:1365.50px;top:212.99px;font-family:'Liberation Sans',sans-serif;font-size:26.31px;line-height:52.62px;color:#a9a9a9;letter-spacing:0.481px;-webkit-text-stroke:0.35px currentColor;"># Sprint 001: Project Scaffold</span>
<div style="left:940px;top:260px;width:1928px;height:36px;box-sizing:border-box;border:4px solid #282828;border-right:none;"></div>
<div style="left:808px;top:260px;width:2060px;height:878px;overflow:hidden;font-family:'DejaVu Sans Mono','Liberation Mono',monospace;font-size:24px;line-height:36px;white-space:pre;-webkit-text-stroke:0.3px;"><span style="right:1979.2px;top:0px;color:#cccccc;">1</span><div class="rel" style="position:absolute;left:132px;top:0px;height:36px;"><span style="color:#649dd8;font-weight:bold;-webkit-text-stroke:0.4px;"># Sprint 001: Project Scaffold</span></div><span style="right:1979.2px;top:36px;color:#6e7681;">2</span><span style="right:1979.2px;top:72px;color:#6e7681;">3</span><div class="rel" style="position:absolute;left:132px;top:72px;height:36px;"><span style="color:#649dd8;font-weight:bold;-webkit-text-stroke:0.4px;">## Overview</span></div><span style="right:1979.2px;top:108px;color:#6e7681;">4</span><span style="right:1979.2px;top:144px;color:#6e7681;">5</span><div class="rel" style="position:absolute;left:132px;top:144px;height:36px;"><span style="color:#cccccc;">This inaugural sprint establishes the foundational technical infrastructure for VibeSolver, an AI twin of an AWS Solutions</span></div><div class="rel" style="position:absolute;left:132px;top:180px;height:36px;"><span style="color:#cccccc;">Architect. The sprint focuses on setting up a complete development environment with the recommended vibe<i class="hy">-</i>coding friendly stack</span></div><div class="rel" style="position:absolute;left:132px;top:216px;height:36px;"><span style="color:#cccccc;">optimized for Claude 4 code generation. We'll create a robust, type<i class="hy">-</i>safe, and testable foundation that supports the product vision</span></div><div class="rel" style="position:absolute;left:132px;top:252px;height:36px;"><span style="color:#cccccc;">of natural language AWS solution generation with visual workflows and architecture diagrams.</span></div><span style="right:1979.2px;top:288px;color:#6e7681;">6</span><span style="right:1979.2px;top:324px;color:#6e7681;">7</span><div class="rel" style="position:absolute;left:132px;top:324px;height:36px;"><span style="color:#649dd8;font-weight:bold;-webkit-text-stroke:0.4px;">## Goals</span></div><span style="right:1979.2px;top:360px;color:#6e7681;">8</span><span style="right:1979.2px;top:396px;color:#6e7681;">9</span><div class="rel" style="position:absolute;left:132px;top:396px;height:36px;"><span style="color:#7691e0;"><i class="hy">-</i></span><span style="color:#cccccc;"> </span><span style="color:#649dd8;font-weight:bold;-webkit-text-stroke:0.4px;"><i class="as">*</i><i class="as">*</i>Scaffold Complete Project Structure<i class="as">*</i><i class="as">*</i></span><span style="color:#cccccc;"> <i class="hy">-</i> Implement the full React 18 + TypeScript + Vite application with proper folder</span></div><div class="rel" style="position:absolute;left:132px;top:432px;height:36px;"><span style="color:#cccccc;">organization</span></div><span style="right:1979.2px;top:468px;color:#6e7681;">10</span><div class="rel" style="position:absolute;left:132px;top:468px;height:36px;"><span style="color:#7691e0;"><i class="hy">-</i></span><span style="color:#cccccc;"> </span><span style="color:#649dd8;font-weight:bold;-webkit-text-stroke:0.4px;"><i class="as">*</i><i class="as">*</i>Configure Development Toolchain<i class="as">*</i><i class="as">*</i></span><span style="color:#cccccc;"> <i class="hy">-</i> Set up testing, linting, formatting, and build tools for optimal developer experience</span></div><span style="right:1979.2px;top:504px;color:#6e7681;">11</span><div class="rel" style="position:absolute;left:132px;top:504px;height:36px;"><span style="color:#7691e0;"><i class="hy">-</i></span><span style="color:#cccccc;"> </span><span style="color:#649dd8;font-weight:bold;-webkit-text-stroke:0.4px;"><i class="as">*</i><i class="as">*</i>Establish Data Layer Foundation<i class="as">*</i><i class="as">*</i></span><span style="color:#cccccc;"> <i class="hy">-</i> Configure SQLite with Drizzle ORM for local<i class="hy">-</i>first data storage</span></div><span style="right:1979.2px;top:540px;color:#6e7681;">12</span><div class="rel" style="position:absolute;left:132px;top:540px;height:36px;"><span style="color:#7691e0;"><i class="hy">-</i></span><span style="color:#cccccc;"> </span><span style="color:#649dd8;font-weight:bold;-webkit-text-stroke:0.4px;"><i class="as">*</i><i class="as">*</i>Integrate AI Capabilities<i class="as">*</i><i class="as">*</i></span><span style="color:#cccccc;"> <i class="hy">-</i> Set up Vercel AI SDK with Anthropic integration for natural language processing</span></div><span style="right:1979.2px;top:576px;color:#6e7681;">13</span><div class="rel" style="position:absolute;left:132px;top:576px;height:36px;"><span style="color:#7691e0;"><i class="hy">-</i></span><span style="color:#cccccc;"> </span><span style="color:#649dd8;font-weight:bold;-webkit-text-stroke:0.4px;"><i class="as">*</i><i class="as">*</i>Enable PWA Functionality<i class="as">*</i><i class="as">*</i></span><span style="color:#cccccc;"> <i class="hy">-</i> Configure Workbox for offline<i class="hy">-</i>first capabilities and local deployment</span></div><span style="right:1979.2px;top:612px;color:#6e7681;">14</span><span style="right:1979.2px;top:648px;color:#6e7681;">15</span><div class="rel" style="position:absolute;left:132px;top:648px;height:36px;"><span style="color:#649dd8;font-weight:bold;-webkit-text-stroke:0.4px;">## Tasks</span></div><span style="right:1979.2px;top:684px;color:#6e7681;">16</span><span style="right:1979.2px;top:720px;color:#6e7681;">17</span><div class="rel" style="position:absolute;left:132px;top:720px;height:36px;"><span style="color:#649dd8;font-weight:bold;-webkit-text-stroke:0.4px;">### 1. Core Project Setup</span></div><span style="right:1979.2px;top:756px;color:#6e7681;">18</span><div class="rel" style="position:absolute;left:132px;top:756px;height:36px;"><span style="color:#649dd8;font-weight:bold;-webkit-text-stroke:0.4px;"><i class="as">*</i><i class="as">*</i>Test Example<i class="as">*</i><i class="as">*</i></span><span style="color:#cccccc;">: </span><span style="color:#ce9178;">`npm run dev`</span><span style="color:#cccccc;"> starts development server on </span><span style="color:#cccccc;text-decoration:underline;text-decoration-thickness:2px;text-underline-offset:5px;">http://localhost:5173</span></div><span style="right:1979.2px;top:792px;color:#6e7681;">19</span><div class="rel" style="position:absolute;left:132px;top:792px;height:36px;"><span style="color:#7691e0;"><i class="hy">-</i></span><span style="color:#cccccc;"> Initialize Vite React TypeScript project structure</span></div><span style="right:1979.2px;top:828px;color:#6e7681;">20</span><div class="rel" style="position:absolute;left:132px;top:828px;height:36px;"><span style="color:#7691e0;"><i class="hy">-</i></span><span style="color:#cccccc;"> Configure package.json with proper scripts and dependencies</span></div><span style="right:1979.2px;top:864px;color:#6e7681;">21</span><div class="rel" style="position:absolute;left:132px;top:864px;height:36px;"><span style="color:#7691e0;"><i class="hy">-</i></span><span style="color:#cccccc;"> Set up pnpm workspace configuration</span></div></div>
<div style="left:2876px;top:259.6px;width:232px;height:878px;overflow:hidden;font-family:'DejaVu Sans Mono','Liberation Mono',monospace;font-size:3.322px;line-height:4px;white-space:pre;font-weight:bold;"><div class="rel" style="position:absolute;left:0;top:0px;height:4px;"><span style="color:#5086bd;"># Sprint 001: Project Scaffold</span></div><div class="rel" style="position:absolute;left:0;top:8px;height:4px;"><span style="color:#5086bd;">## Overview</span></div><div class="rel" style="position:absolute;left:0;top:16px;height:4px;"><span style="color:#b4b4b4;">This inaugural sprint establishes the foundational technical infrastructure for VibeSolver, an AI twin of an AWS Solutions </span></div><div class="rel" style="position:absolute;left:0;top:20px;height:4px;"><span style="color:#b4b4b4;">Architect. The sprint focuses on setting up a complete development environment with the recommended vibe-coding friendly stack </span></div><div class="rel" style="position:absolute;left:0;top:24px;height:4px;"><span style="color:#b4b4b4;">optimized for Claude 4 code generation. We'll create a robust, type-safe, and testable foundation that supports the product vision </span></div><div class="rel" style="position:absolute;left:0;top:28px;height:4px;"><span style="color:#b4b4b4;">of natural language AWS solution generation with visual workflows and architecture diagrams.</span></div><div class="rel" style="position:absolute;left:0;top:36px;height:4px;"><span style="color:#5086bd;">## Goals</span></div><div class="rel" style="position:absolute;left:0;top:44px;height:4px;"><span style="color:#5b7fc0;">-</span><span style="color:#b4b4b4;"> </span><span style="color:#5086bd;">**Scaffold Complete Project Structure**</span><span style="color:#b4b4b4;"> - Implement the full React 18 + TypeScript + Vite application with proper folder </span></div><div class="rel" style="position:absolute;left:0;top:48px;height:4px;"><span style="color:#b4b4b4;">organization</span></div><div class="rel" style="position:absolute;left:0;top:52px;height:4px;"><span style="color:#5b7fc0;">-</span><span style="color:#b4b4b4;"> </span><span style="color:#5086bd;">**Configure Development Toolchain**</span><span style="color:#b4b4b4;"> - Set up testing, linting, formatting, and build tools for optimal developer experience</span></div><div class="rel" style="position:absolute;left:0;top:56px;height:4px;"><span style="color:#5b7fc0;">-</span><span style="color:#b4b4b4;"> </span><span style="color:#5086bd;">**Establish Data Layer Foundation**</span><span style="color:#b4b4b4;"> - Configure SQLite with Drizzle ORM for local-first data storage</span></div><div class="rel" style="position:absolute;left:0;top:60px;height:4px;"><span style="color:#5b7fc0;">-</span><span style="color:#b4b4b4;"> </span><span style="color:#5086bd;">**Integrate AI Capabilities**</span><span style="color:#b4b4b4;"> - Set up Vercel AI SDK with Anthropic integration for natural language processing</span></div><div class="rel" style="position:absolute;left:0;top:64px;height:4px;"><span style="color:#5b7fc0;">-</span><span style="color:#b4b4b4;"> </span><span style="color:#5086bd;">**Enable PWA Functionality**</span><span style="color:#b4b4b4;"> - Configure Workbox for offline-first capabilities and local deployment</span></div><div class="rel" style="position:absolute;left:0;top:72px;height:4px;"><span style="color:#5086bd;">## Tasks</span></div><div class="rel" style="position:absolute;left:0;top:80px;height:4px;"><span style="color:#5086bd;">### 1. Core Project Setup</span></div><div class="rel" style="position:absolute;left:0;top:84px;height:4px;"><span style="color:#5086bd;">**Test Example**</span><span style="color:#b4b4b4;">: </span><span style="color:#b07f68;">`npm run dev`</span><span style="color:#b4b4b4;"> starts development server on </span><span style="color:#b4b4b4;">http://localhost:5173</span></div><div class="rel" style="position:absolute;left:0;top:88px;height:4px;"><span style="color:#5b7fc0;">-</span><span style="color:#b4b4b4;"> Initialize Vite React TypeScript project structure</span></div><div class="rel" style="position:absolute;left:0;top:92px;height:4px;"><span style="color:#5b7fc0;">-</span><span style="color:#b4b4b4;"> Configure package.json with proper scripts and dependencies</span></div><div class="rel" style="position:absolute;left:0;top:96px;height:4px;"><span style="color:#5b7fc0;">-</span><span style="color:#b4b4b4;"> Set up pnpm workspace configuration</span></div><div class="rel" style="position:absolute;left:0;top:100px;height:4px;"><span style="color:#5b7fc0;">-</span><span style="color:#b4b4b4;"> Create proper .gitignore for Node.js/React project</span></div><div class="rel" style="position:absolute;left:0;top:108px;height:4px;"><span style="color:#5086bd;">### 2. Dependencies Installation &amp; Configuration</span></div><div class="rel" style="position:absolute;left:0;top:112px;height:4px;"><span style="color:#5086bd;">**Test Example**</span><span style="color:#b4b4b4;">: </span><span style="color:#b07f68;">`npm run build`</span><span style="color:#b4b4b4;"> successfully compiles TypeScript without errors</span></div><div class="rel" style="position:absolute;left:0;top:116px;height:4px;"><span style="color:#5b7fc0;">-</span><span style="color:#b4b4b4;"> Install core dependencies: React 18+, TypeScript, Tailwind CSS</span></div><div class="rel" style="position:absolute;left:0;top:120px;height:4px;"><span style="color:#5b7fc0;">-</span><span style="color:#b4b4b4;"> Install data layer: better-sqlite3, drizzle-orm, drizzle-kit</span></div><div class="rel" style="position:absolute;left:0;top:124px;height:4px;"><span style="color:#5b7fc0;">-</span><span style="color:#b4b4b4;"> Install state management: zustand, @tanstack/react-query</span></div><div class="rel" style="position:absolute;left:0;top:128px;height:4px;"><span style="color:#5b7fc0;">-</span><span style="color:#b4b4b4;"> Install AI integration: ai, @ai-sdk/anthropic</span></div><div class="rel" style="position:absolute;left:0;top:132px;height:4px;"><span style="color:#5b7fc0;">-</span><span style="color:#b4b4b4;"> Install PWA support: vite-plugin-pwa, workbox-window</span></div><div class="rel" style="position:absolute;left:0;top:136px;height:4px;"><span style="color:#5b7fc0;">-</span><span style="color:#b4b4b4;"> Install development tools: vitest, react-testing-library, eslint, prettier</span></div><div class="rel" style="position:absolute;left:0;top:144px;height:4px;"><span style="color:#5086bd;">### 3. TypeScript &amp; Build Configuration</span></div><div class="rel" style="position:absolute;left:0;top:148px;height:4px;"><span style="color:#5086bd;">**Test Example**</span><span style="color:#b4b4b4;">: TypeScript compilation passes with strict mode enabled</span></div><div class="rel" style="position:absolute;left:0;top:152px;height:4px;"><span style="color:#5b7fc0;">-</span><span style="color:#b4b4b4;"> Configure strict TypeScript settings in tsconfig.json</span></div><div class="rel" style="position:absolute;left:0;top:156px;height:4px;"><span style="color:#5b7fc0;">-</span><span style="color:#b4b4b4;"> Set up Vite configuration with proper plugins and optimizations</span></div><div class="rel" style="position:absolute;left:0;top:160px;height:4px;"><span style="color:#5b7fc0;">-</span><span style="color:#b4b4b4;"> Configure path aliases for clean imports (@/components, @/lib, etc.)</span></div><div class="rel" style="position:absolute;left:0;top:164px;height:4px;"><span style="color:#5b7fc0;">-</span><span style="color:#b4b4b4;"> Set up environment variable handling for development/production</span></div><div class="rel" style="position:absolute;left:0;top:172px;height:4px;"><span style="color:#5086bd;">### 4. Styling &amp; UI Foundation</span></div><div class="rel" style="position:absolute;left:0;top:176px;height:4px;"><span style="color:#5086bd;">**Test Example**</span><span style="color:#b4b4b4;">: Tailwind utilities render correctly in browser</span></div><div class="rel" style="position:absolute;left:0;top:180px;height:4px;"><span style="color:#5b7fc0;">-</span><span style="color:#b4b4b4;"> Initialize and configure Tailwind CSS with PostCSS</span></div><div class="rel" style="position:absolute;left:0;top:184px;height:4px;"><span style="color:#5b7fc0;">-</span><span style="color:#b4b4b4;"> Set up CSS reset and base styles</span></div><div class="rel" style="position:absolute;left:0;top:188px;height:4px;"><span style="color:#5b7fc0;">-</span><span style="color:#b4b4b4;"> Create design system foundation (colors, typography, spacing)</span></div><div class="rel" style="position:absolute;left:0;top:192px;height:4px;"><span style="color:#5b7fc0;">-</span><span style="color:#b4b4b4;"> Configure Tailwind for dark/light mode support</span></div><div class="rel" style="position:absolute;left:0;top:200px;height:4px;"><span style="color:#5086bd;">### 5. Database &amp; ORM Setup</span></div><div class="rel" style="position:absolute;left:0;top:204px;height:4px;"><span style="color:#5086bd;">**Test Example**</span><span style="color:#b4b4b4;">: Database connection established and schema can be pushed</span></div><div class="rel" style="position:absolute;left:0;top:208px;height:4px;"><span style="color:#5b7fc0;">-</span><span style="color:#b4b4b4;"> Configure SQLite database file structure</span></div><div class="rel" style="position:absolute;left:0;top:212px;height:4px;"><span style="color:#5b7fc0;">-</span><span style="color:#b4b4b4;"> Set up Drizzle ORM configuration and scripts</span></div><div class="rel" style="position:absolute;left:0;top:216px;height:4px;"><span style="color:#5b7fc0;">-</span><span style="color:#b4b4b4;"> Create initial database schema files</span></div><div class="rel" style="position:absolute;left:0;top:220px;height:4px;"><span style="color:#5b7fc0;">-</span><span style="color:#b4b4b4;"> Implement database migration system</span></div><div class="rel" style="position:absolute;left:0;top:224px;height:4px;"><span style="color:#5b7fc0;">-</span><span style="color:#b4b4b4;"> Add database seeding capabilities</span></div><div class="rel" style="position:absolute;left:0;top:232px;height:4px;"><span style="color:#5086bd;">### 6. State Management Architecture</span></div><div class="rel" style="position:absolute;left:0;top:236px;height:4px;"><span style="color:#5086bd;">**Test Example**</span><span style="color:#b4b4b4;">: Zustand store updates trigger React re-renders</span></div><div class="rel" style="position:absolute;left:0;top:240px;height:4px;"><span style="color:#5b7fc0;">-</span><span style="color:#b4b4b4;"> Set up Zustand store structure for global state</span></div><div class="rel" style="position:absolute;left:0;top:244px;height:4px;"><span style="color:#5b7fc0;">-</span><span style="color:#b4b4b4;"> Configure TanStack Query for server state management</span></div><div class="rel" style="position:absolute;left:0;top:248px;height:4px;"><span style="color:#5b7fc0;">-</span><span style="color:#b4b4b4;"> Create state management patterns and utilities</span></div><div class="rel" style="position:absolute;left:0;top:252px;height:4px;"><span style="color:#5b7fc0;">-</span><span style="color:#b4b4b4;"> Implement proper TypeScript types for store states</span></div><div class="rel" style="position:absolute;left:0;top:260px;height:4px;"><span style="color:#5086bd;">### 7. AI Integration Foundation</span></div><div class="rel" style="position:absolute;left:0;top:264px;height:4px;"><span style="color:#5086bd;">**Test Example**</span><span style="color:#b4b4b4;">: AI SDK successfully connects to Anthropic API</span></div><div class="rel" style="position:absolute;left:0;top:268px;height:4px;"><span style="color:#5b7fc0;">-</span><span style="color:#b4b4b4;"> Configure Vercel AI SDK with Anthropic provider</span></div><div class="rel" style="position:absolute;left:0;top:272px;height:4px;"><span style="color:#5b7fc0;">-</span><span style="color:#b4b4b4;"> Set up environment variables for API keys</span></div><div class="rel" style="position:absolute;left:0;top:276px;height:4px;"><span style="color:#5b7fc0;">-</span><span style="color:#b4b4b4;"> Create AI service abstraction layer</span></div><div class="rel" style="position:absolute;left:0;top:280px;height:4px;"><span style="color:#5b7fc0;">-</span><span style="color:#b4b4b4;"> Implement error handling for AI API calls</span></div><div class="rel" style="position:absolute;left:0;top:288px;height:4px;"><span style="color:#5086bd;">### 8. Testing Infrastructure</span></div><div class="rel" style="position:absolute;left:0;top:292px;height:4px;"><span style="color:#5086bd;">**Test Example**</span><span style="color:#b4b4b4;">: </span><span style="color:#b07f68;">`npm run test`</span><span style="color:#b4b4b4;"> executes all tests successfully</span></div><div class="rel" style="position:absolute;left:0;top:296px;height:4px;"><span style="color:#5b7fc0;">-</span><span style="color:#b4b4b4;"> Configure Vitest for unit and integration testing</span></div><div class="rel" style="position:absolute;left:0;top:300px;height:4px;"><span style="color:#5b7fc0;">-</span><span style="color:#b4b4b4;"> Set up React Testing Library for component testing</span></div><div class="rel" style="position:absolute;left:0;top:304px;height:4px;"><span style="color:#5b7fc0;">-</span><span style="color:#b4b4b4;"> Create test utilities and helpers</span></div><div class="rel" style="position:absolute;left:0;top:308px;height:4px;"><span style="color:#5b7fc0;">-</span><span style="color:#b4b4b4;"> Implement testing patterns for stores and hooks</span></div><div class="rel" style="position:absolute;left:0;top:312px;height:4px;"><span style="color:#5b7fc0;">-</span><span style="color:#b4b4b4;"> Add test coverage reporting</span></div><div class="rel" style="position:absolute;left:0;top:320px;height:4px;"><span style="color:#5086bd;">### 9. Development Tools &amp; Quality Assurance</span></div><div class="rel" style="position:absolute;left:0;top:324px;height:4px;"><span style="color:#5086bd;">**Test Example**</span><span style="color:#b4b4b4;">: </span><span style="color:#b07f68;">`npm run lint`</span><span style="color:#b4b4b4;"> and </span><span style="color:#b07f68;">`npm run format`</span><span style="color:#b4b4b4;"> execute without errors</span></div><div class="rel" style="position:absolute;left:0;top:328px;height:4px;"><span style="color:#5b7fc0;">-</span><span style="color:#b4b4b4;"> Configure ESLint with TypeScript and React rules</span></div><div class="rel" style="position:absolute;left:0;top:332px;height:4px;"><span style="color:#5b7fc0;">-</span><span style="color:#b4b4b4;"> Set up Prettier for consistent code formatting</span></div><div class="rel" style="position:absolute;left:0;top:336px;height:4px;"><span style="color:#5b7fc0;">-</span><span style="color:#b4b4b4;"> Create pre-commit hooks for code quality</span></div><div class="rel" style="position:absolute;left:0;top:340px;height:4px;"><span style="color:#5b7fc0;">-</span><span style="color:#b4b4b4;"> Set up VS Code workspace configuration</span></div><div class="rel" style="position:absolute;left:0;top:348px;height:4px;"><span style="color:#5086bd;">### 10. PWA Configuration</span></div><div class="rel" style="position:absolute;left:0;top:352px;height:4px;"><span style="color:#5086bd;">**Test Example**</span><span style="color:#b4b4b4;">: Application installs as PWA and works offline</span></div><div class="rel" style="position:absolute;left:0;top:356px;height:4px;"><span style="color:#5b7fc0;">-</span><span style="color:#b4b4b4;"> Configure Vite PWA plugin with service worker</span></div><div class="rel" style="position:absolute;left:0;top:360px;height:4px;"><span style="color:#5b7fc0;">-</span><span style="color:#b4b4b4;"> Set up app manifest.json with proper icons and metadata</span></div><div class="rel" style="position:absolute;left:0;top:364px;height:4px;"><span style="color:#5b7fc0;">-</span><span style="color:#b4b4b4;"> Implement offline caching strategies</span></div><div class="rel" style="position:absolute;left:0;top:368px;height:4px;"><span style="color:#5b7fc0;">-</span><span style="color:#b4b4b4;"> Add PWA installation prompts</span></div><div class="rel" style="position:absolute;left:0;top:376px;height:4px;"><span style="color:#5086bd;">### 11. Project Structure &amp; Documentation</span></div><div class="rel" style="position:absolute;left:0;top:380px;height:4px;"><span style="color:#5086bd;">**Test Example**</span><span style="color:#b4b4b4;">: All import paths resolve correctly and documentation is accessible</span></div><div class="rel" style="position:absolute;left:0;top:384px;height:4px;"><span style="color:#5b7fc0;">-</span><span style="color:#b4b4b4;"> Create organized folder structure (/src/components, /src/lib, /src/hooks, etc.)</span></div><div class="rel" style="position:absolute;left:0;top:388px;height:4px;"><span style="color:#5b7fc0;">-</span><span style="color:#b4b4b4;"> Set up barrel exports for clean imports</span></div><div class="rel" style="position:absolute;left:0;top:392px;height:4px;"><span style="color:#5b7fc0;">-</span><span style="color:#b4b4b4;"> Create CLAUDE.md with code generation guidelines</span></div><div class="rel" style="position:absolute;left:0;top:396px;height:4px;"><span style="color:#5b7fc0;">-</span><span style="color:#b4b4b4;"> Document development workflow and commands</span></div><div class="rel" style="position:absolute;left:0;top:404px;height:4px;"><span style="color:#5086bd;">## Acceptance Criteria</span></div><div class="rel" style="position:absolute;left:0;top:412px;height:4px;"><span style="color:#5b7fc0;">-</span><span style="color:#b4b4b4;"> [ ] </span><span style="color:#b07f68;">`pnpm install`</span><span style="color:#b4b4b4;"> successfully installs all dependencies</span></div><div class="rel" style="position:absolute;left:0;top:416px;height:4px;"><span style="color:#5b7fc0;">-</span><span style="color:#b4b4b4;"> [ ] </span><span style="color:#b07f68;">`pnpm dev`</span><span style="color:#b4b4b4;"> starts development server with hot reload</span></div><div class="rel" style="position:absolute;left:0;top:420px;height:4px;"><span style="color:#5b7fc0;">-</span><span style="color:#b4b4b4;"> [ ] </span><span style="color:#b07f68;">`pnpm build`</span><span style="color:#b4b4b4;"> creates optimized production bundle</span></div><div class="rel" style="position:absolute;left:0;top:424px;height:4px;"><span style="color:#5b7fc0;">-</span><span style="color:#b4b4b4;"> [ ] </span><span style="color:#b07f68;">`pnpm test`</span><span style="color:#b4b4b4;"> runs all tests with coverage reporting</span></div><div class="rel" style="position:absolute;left:0;top:428px;height:4px;"><span style="color:#5b7fc0;">-</span><span style="color:#b4b4b4;"> [ ] </span><span style="color:#b07f68;">`pnpm lint`</span><span style="color:#b4b4b4;"> passes without errors</span></div><div class="rel" style="position:absolute;left:0;top:432px;height:4px;"><span style="color:#5b7fc0;">-</span><span style="color:#b4b4b4;"> [ ] TypeScript compilation succeeds with strict mode</span></div><div class="rel" style="position:absolute;left:0;top:436px;height:4px;"><span style="color:#5b7fc0;">-</span><span style="color:#b4b4b4;"> [ ] Tailwind CSS utilities render correctly</span></div><div class="rel" style="position:absolute;left:0;top:440px;height:4px;"><span style="color:#5b7fc0;">-</span><span style="color:#b4b4b4;"> [ ] Database migrations run successfully</span></div><div class="rel" style="position:absolute;left:0;top:444px;height:4px;"><span style="color:#5b7fc0;">-</span><span style="color:#b4b4b4;"> [ ] AI SDK connects to Anthropic API (with valid API key)</span></div><div class="rel" style="position:absolute;left:0;top:448px;height:4px;"><span style="color:#5b7fc0;">-</span><span style="color:#b4b4b4;"> [ ] Application installs and functions as PWA</span></div><div class="rel" style="position:absolute;left:0;top:452px;height:4px;"><span style="color:#5b7fc0;">-</span><span style="color:#b4b4b4;"> [ ] All code follows established patterns and conventions</span></div><div class="rel" style="position:absolute;left:0;top:456px;height:4px;"><span style="color:#5b7fc0;">-</span><span style="color:#b4b4b4;"> [ ] Project structure supports scalable feature development</span></div><div class="rel" style="position:absolute;left:0;top:464px;height:4px;"><span style="color:#5086bd;">## Development Instructions</span></div><div class="rel" style="position:absolute;left:0;top:472px;height:4px;"><span style="color:#5b7fc0;">1.</span><span style="color:#b4b4b4;"> </span><span style="color:#5086bd;">**Environment Setup**</span><span style="color:#b4b4b4;">: Ensure Node.js 18+ and pnpm are installed</span></div><div class="rel" style="position:absolute;left:0;top:476px;height:4px;"><span style="color:#5b7fc0;">2.</span><span style="color:#b4b4b4;"> </span><span style="color:#5086bd;">**API Keys**</span><span style="color:#b4b4b4;">: Create </span><span style="color:#b07f68;">`.env.local`</span><span style="color:#b4b4b4;"> with required API keys (ANTHROPIC_API_KEY)</span></div><div class="rel" style="position:absolute;left:0;top:480px;height:4px;"><span style="color:#5b7fc0;">3.</span><span style="color:#b4b4b4;"> </span><span style="color:#5086bd;">**Database**</span><span style="color:#b4b4b4;">: Initialize SQLite database and run initial migrations</span></div><div class="rel" style="position:absolute;left:0;top:484px;height:4px;"><span style="color:#5b7fc0;">4.</span><span style="color:#b4b4b4;"> </span><span style="color:#5086bd;">**Testing Strategy**</span><span style="color:#b4b4b4;">: Follow TDD principles - write tests before implementation</span></div><div class="rel" style="position:absolute;left:0;top:488px;height:4px;"><span style="color:#5b7fc0;">5.</span><span style="color:#b4b4b4;"> </span><span style="color:#5086bd;">**Code Quality**</span><span style="color:#b4b4b4;">: All code must pass ESLint and Prettier checks</span></div><div class="rel" style="position:absolute;left:0;top:492px;height:4px;"><span style="color:#5b7fc0;">6.</span><span style="color:#b4b4b4;"> </span><span style="color:#5086bd;">**Documentation**</span><span style="color:#b4b4b4;">: Update CLAUDE.md with patterns and conventions established</span></div><div class="rel" style="position:absolute;left:0;top:496px;height:4px;"><span style="color:#5b7fc0;">7.</span><span style="color:#b4b4b4;"> </span><span style="color:#5086bd;">**Modularity**</span><span style="color:#b4b4b4;">: Design components and utilities for reusability and testability</span></div><div class="rel" style="position:absolute;left:0;top:500px;height:4px;"><span style="color:#5b7fc0;">8.</span><span style="color:#b4b4b4;"> </span><span style="color:#5086bd;">**Type Safety**</span><span style="color:#b4b4b4;">: Leverage TypeScript strict mode for compile-time error prevention</span></div><div class="rel" style="position:absolute;left:0;top:508px;height:4px;"><span style="color:#5086bd;">## Success Metrics</span></div><div class="rel" style="position:absolute;left:0;top:516px;height:4px;"><span style="color:#5b7fc0;">-</span><span style="color:#b4b4b4;"> Zero TypeScript compilation errors</span></div><div class="rel" style="position:absolute;left:0;top:520px;height:4px;"><span style="color:#5b7fc0;">-</span><span style="color:#b4b4b4;"> 100% test coverage for utility functions</span></div><div class="rel" style="position:absolute;left:0;top:524px;height:4px;"><span style="color:#5b7fc0;">-</span><span style="color:#b4b4b4;"> Sub-200ms development server start time</span></div><div class="rel" style="position:absolute;left:0;top:528px;height:4px;"><span style="color:#5b7fc0;">-</span><span style="color:#b4b4b4;"> Lighthouse PWA score &gt; 90</span></div><div class="rel" style="position:absolute;left:0;top:532px;height:4px;"><span style="color:#5b7fc0;">-</span><span style="color:#b4b4b4;"> All linting rules pass</span></div><div class="rel" style="position:absolute;left:0;top:536px;height:4px;"><span style="color:#5b7fc0;">-</span><span style="color:#b4b4b4;"> Database operations complete under 10ms</span></div><div class="rel" style="position:absolute;left:0;top:540px;height:4px;"><span style="color:#5b7fc0;">-</span><span style="color:#b4b4b4;"> Bundle size under 500KB (gzipped)</span></div><div class="rel" style="position:absolute;left:0;top:548px;height:4px;"><span style="color:#b4b4b4;">This sprint establishes a solid foundation for rapid feature development in subsequent sprints while maintaining code quality, type </span></div><div class="rel" style="position:absolute;left:0;top:552px;height:4px;"><span style="color:#b4b4b4;">safety, and developer experience excellence.</span></div></div>
<div style="left:3108px;top:260px;width:28px;height:130px;background:#454545;"></div>
<div style="left:3108px;top:260px;width:28px;height:4px;background:#8c8c8c;"></div>
<span style="left:848.90px;top:1152.94px;font-family:'Liberation Sans',sans-serif;font-size:22.26px;line-height:44.52px;color:#9d9d9d;transform-origin:0 0;transform:scaleX(0.9540);-webkit-text-stroke:0.35px currentColor;">PROBLEMS</span>
<span style="left:1016.80px;top:1152.94px;font-family:'Liberation Sans',sans-serif;font-size:22.26px;line-height:44.52px;color:#9d9d9d;transform-origin:0 0;transform:scaleX(0.9847);-webkit-text-stroke:0.35px currentColor;">OUTPUT</span>
<span style="left:1156.90px;top:1152.94px;font-family:'Liberation Sans',sans-serif;font-size:22.26px;line-height:44.52px;color:#9d9d9d;transform-origin:0 0;transform:scaleX(0.9666);-webkit-text-stroke:0.35px currentColor;">DEBUG CONSOLE</span>
<span style="left:1394.00px;top:1152.94px;font-family:'Liberation Sans',sans-serif;font-size:22.26px;line-height:44.52px;color:#e7e7e7;transform-origin:0 0;transform:scaleX(0.9772);-webkit-text-stroke:0.35px currentColor;">TERMINAL</span>
<span style="left:1552.90px;top:1152.94px;font-family:'Liberation Sans',sans-serif;font-size:22.26px;line-height:44.52px;color:#9d9d9d;transform-origin:0 0;transform:scaleX(0.9587);-webkit-text-stroke:0.35px currentColor;">PORTS</span>
<div style="left:1389px;top:1194px;width:120px;height:2px;background:#3578d2;"></div>
<svg style="left:2693.5px;top:1159px;" width="32" height="32" viewBox="0 0 16 16"><rect x="1.5" y="1.5" width="13" height="13" rx="1.5" fill="none" stroke="#cccccc" stroke-width="1" stroke-linecap="butt" stroke-linejoin="miter" /><path d="M4.3 5.6 L7.4 8.4 L4.3 11.2 M8.6 11.4 H12" fill="none" stroke="#cccccc" stroke-width="1" stroke-linecap="butt" stroke-linejoin="miter" /></svg>
<span style="left:2734.60px;top:1152.21px;font-family:'Liberation Sans',sans-serif;font-size:24.29px;line-height:48.58px;color:#cccccc;transform-origin:0 0;transform:scaleX(0.9415);-webkit-text-stroke:0.35px currentColor;">node</span>
<svg style="left:2801px;top:1158px;" width="32" height="32" viewBox="0 0 16 16"><path d="M8 1.6 V14.4 M1.6 8 H14.4" fill="none" stroke="#cccccc" stroke-width="1" stroke-linecap="butt" stroke-linejoin="miter" /></svg>
<svg style="left:2835.8px;top:1163.5px;" width="24" height="24" viewBox="0 0 16 16"><polyline points="3.3,6 8,10.7 12.7,6" fill="none" stroke="#cccccc" stroke-width="1.0" stroke-linecap="butt" stroke-linejoin="miter" /></svg>
<svg style="left:2877px;top:1158px;" width="32" height="32" viewBox="0 0 16 16"><rect x="1.5" y="2.5" width="13" height="12" rx="1.2" fill="none" stroke="#cccccc" stroke-width="1" stroke-linecap="butt" stroke-linejoin="miter" /><path d="M8 2.5 V14.5" fill="none" stroke="#cccccc" stroke-width="1" stroke-linecap="butt" stroke-linejoin="miter" /></svg>
<svg style="left:2923px;top:1158px;" width="32" height="32" viewBox="0 0 16 16"><path d="M2 4 H14" fill="none" stroke="#cccccc" stroke-width="1" stroke-linecap="butt" stroke-linejoin="miter" /><path d="M6 3.8 V2.4 Q6 1.7 6.7 1.7 H9.3 Q10 1.7 10 2.4 V3.8" fill="none" stroke="#cccccc" stroke-width="1" stroke-linecap="butt" stroke-linejoin="miter" /><path d="M3.5 4.2 V13.4 Q3.5 14.4 4.5 14.4 H11.5 Q12.5 14.4 12.5 13.4 V4.2" fill="none" stroke="#cccccc" stroke-width="1" stroke-linecap="butt" stroke-linejoin="miter" /><path d="M6.2 6 V12.6 M8 6 V12.6 M9.8 6 V12.6" fill="none" stroke="#cccccc" stroke-width="1" stroke-linecap="butt" stroke-linejoin="miter" /></svg>
<svg style="left:2972px;top:1159px;" width="32" height="32" viewBox="0 0 16 16"><circle cx="3" cy="8" r="1.1" fill="#cccccc"/><circle cx="8" cy="8" r="1.1" fill="#cccccc"/><circle cx="13" cy="8" r="1.1" fill="#cccccc"/></svg>
<svg style="left:3022px;top:1159px;" width="32" height="32" viewBox="0 0 16 16"><polyline points="3.3,10.4 8,5.7 12.7,10.4" fill="none" stroke="#cccccc" stroke-width="1" stroke-linecap="butt" stroke-linejoin="miter" /></svg>
<svg style="left:3074px;top:1158px;" width="32" height="32" viewBox="0 0 16 16"><path d="M3.8 3.8 L12.2 12.2 M12.2 3.8 L3.8 12.2" fill="none" stroke="#cccccc" stroke-width="1.05" stroke-linecap="butt" stroke-linejoin="miter" /></svg>
<div style="left:3108px;top:1220px;width:1px;height:700px;background:#05050a;"></div>
<div style="left:3108px;top:1220px;width:28px;height:1px;background:#05050a;"></div>
<div style="left:3109px;top:1239px;width:9px;height:12.5px;background:#6a9fc2;"></div>
<div style="left:848px;top:1220px;width:2260px;height:700px;font-family:'DejaVu Sans Mono','Liberation Mono',monospace;font-size:24px;line-height:28px;white-space:pre;letter-spacing:-0.4492px;color:#cccccc;-webkit-text-stroke:0.3px;"><div class="rel" style="position:absolute;left:70px;top:0px;height:28px;"><span style="">Done in 1.9s</span></div><div style="left:1px;top:63px;width:13px;height:13px;border-radius:50%;background:#62b866;"></div><div class="rel" style="position:absolute;left:28px;top:56px;height:28px;"><span style="font-weight:bold;-webkit-text-stroke:0.4px;">Update Todos</span></div><div style="left:39px;top:85px;width:13px;height:23px;box-sizing:border-box;border-left:2px solid #b8b8b8;border-bottom:2px solid #b8b8b8;"></div><svg style="left:71px;top:93.7px" width="12.2" height="12.2" viewBox="0 0 12.2 12.2"><rect x="0.75" y="0.75" width="10.7" height="10.7" fill="none" stroke="#cccccc" stroke-width="1.5"/><path d="M1.2 1.2 L11 11 M11 1.2 L1.2 11" stroke="#cccccc" stroke-width="1.3" fill="none"/></svg><div class="rel" style="position:absolute;left:98px;top:84px;height:28px;"><span style="">Initialize Vite React TypeScript project structure</span></div><div style="left:97px;top:96.8px;width:701px;height:1.7px;background:#cccccc;"></div><svg style="left:71px;top:121.7px" width="12.2" height="12.2" viewBox="0 0 12.2 12.2"><rect x="0.75" y="0.75" width="10.7" height="10.7" fill="none" stroke="#cccccc" stroke-width="1.5"/><path d="M1.2 1.2 L11 11 M11 1.2 L1.2 11" stroke="#cccccc" stroke-width="1.3" fill="none"/></svg><div class="rel" style="position:absolute;left:98px;top:112px;height:28px;"><span style="">Install and configure core dependencies (React, TypeScript, Tailwind)</span></div><div style="left:97px;top:124.8px;width:967px;height:1.7px;background:#cccccc;"></div><svg style="left:71px;top:149.7px" width="12.2" height="12.2" viewBox="0 0 12.2 12.2"><rect x="0.75" y="0.75" width="10.7" height="10.7" fill="none" stroke="#cccccc" stroke-width="1.5"/><path d="M1.2 1.2 L11 11 M11 1.2 L1.2 11" stroke="#cccccc" stroke-width="1.3" fill="none"/></svg><div class="rel" style="position:absolute;left:98px;top:140px;height:28px;"><span style="">Set up data layer with SQLite and Drizzle ORM</span></div><div style="left:97px;top:152.8px;width:631px;height:1.7px;background:#cccccc;"></div><svg style="left:71px;top:177.7px" width="12.2" height="12.2" viewBox="0 0 12.2 12.2"><rect x="0.75" y="0.75" width="10.7" height="10.7" fill="none" stroke="#62b866" stroke-width="1.5"/><path d="M1.2 1.2 L11 11 M11 1.2 L1.2 11" stroke="#62b866" stroke-width="1.3" fill="none"/></svg><div class="rel" style="position:absolute;left:98px;top:168px;height:28px;"><span style="color:#62b866;">Configure state management with Zustand and TanStack Query</span></div><div style="left:97px;top:180.8px;width:813px;height:1.7px;background:#62b866;"></div><svg style="left:71px;top:205.7px" width="12.2" height="12.2" viewBox="0 0 12.2 12.2"><rect x="0.75" y="0.75" width="10.7" height="10.7" fill="none" stroke="#afb6f7" stroke-width="1.5"/></svg><div class="rel" style="position:absolute;left:98px;top:196px;height:28px;"><span style="color:#afb6f7;font-weight:bold;-webkit-text-stroke:0.4px;">Integrate AI capabilities with Vercel AI SDK and Anthropic</span></div><svg style="left:71px;top:233.7px" width="12.2" height="12.2" viewBox="0 0 12.2 12.2"><rect x="0.75" y="0.75" width="10.7" height="10.7" fill="none" stroke="#cccccc" stroke-width="1.5"/></svg><div class="rel" style="position:absolute;left:98px;top:224px;height:28px;"><span style="">Set up testing infrastructure with Vitest and React Testing Library</span></div><svg style="left:71px;top:261.7px" width="12.2" height="12.2" viewBox="0 0 12.2 12.2"><rect x="0.75" y="0.75" width="10.7" height="10.7" fill="none" stroke="#cccccc" stroke-width="1.5"/></svg><div class="rel" style="position:absolute;left:98px;top:252px;height:28px;"><span style="">Configure development tools (ESLint, Prettier, TypeScript strict)</span></div><svg style="left:71px;top:289.7px" width="12.2" height="12.2" viewBox="0 0 12.2 12.2"><rect x="0.75" y="0.75" width="10.7" height="10.7" fill="none" stroke="#cccccc" stroke-width="1.5"/></svg><div class="rel" style="position:absolute;left:98px;top:280px;height:28px;"><span style="">Enable PWA functionality with Workbox</span></div><svg style="left:71px;top:317.7px" width="12.2" height="12.2" viewBox="0 0 12.2 12.2"><rect x="0.75" y="0.75" width="10.7" height="10.7" fill="none" stroke="#cccccc" stroke-width="1.5"/></svg><div class="rel" style="position:absolute;left:98px;top:308px;height:28px;"><span style="">Create organized project structure and documentation</span></div><div style="left:1px;top:371px;width:13px;height:13px;border-radius:50%;background:#d4d4d4;"></div><div class="rel" style="position:absolute;left:28px;top:364px;height:28px;"><span style="color:#dddddd;font-weight:bold;-webkit-text-stroke:0.4px;">Write</span><span style="">(src/lib/ai.ts)…</span></div><div style="left:39px;top:393px;width:13px;height:23px;box-sizing:border-box;border-left:2px solid #b8b8b8;border-bottom:2px solid #b8b8b8;"></div><div class="rel" style="position:absolute;left:70px;top:392px;height:28px;"><span style="color:#9a9a9a;">Ultrastreaming…</span></div><div class="rel" style="position:absolute;left:0px;top:448px;height:28px;"><span style="color:#d88662;">✻</span><span style="color:#d88662;"> Puttering…</span><span style="color:#9a9a9a;"> (56s · </span><span style="color:#9a9a9a;">⚒</span><span style="color:#9a9a9a;"> 5.5k tokens · </span><span style="color:#9a9a9a;font-weight:bold;-webkit-text-stroke:0.4px;">esc</span><span style="color:#9a9a9a;"> to interrupt)</span></div><div style="left:6px;top:517px;width:2243px;height:58px;box-sizing:border-box;border:2px solid #808080;border-radius:9px;"></div><div class="rel" style="position:absolute;left:28px;top:532px;height:28px;"><span style="color:#bdbdbd;">&gt;</span></div><svg style="left:29px;top:595px" width="26" height="14" viewBox="0 0 26 14"><path d="M0 1 L11 7 L0 13 Z M14 1 L25 7 L14 13 Z" fill="#a98bf5"/></svg><div class="rel" style="position:absolute;left:70px;top:588px;height:28px;"><span style="color:#a98bf5;">auto<i class="hy">-</i>accept edits on</span><span style="color:#808080;"> (shift+tab to toggle)</span></div><svg style="left:1988px;top:595px" width="15" height="15" viewBox="0 0 15 15"><path d="M1 1 H10 V10 H1 Z M5 5 H14 V14 H5 Z" fill="none" stroke="#afb6f7" stroke-width="1.6"/></svg><div class="rel" style="position:absolute;left:2016px;top:588px;height:28px;"><span style="color:#afb6f7;">1 line selected</span></div></div>
<div style="left:112px;top:1922px;width:68px;height:42px;background:#3578d2;"></div>
<svg style="left:129px;top:1927px;" width="32" height="32" viewBox="0 0 32 32"><path d="M25.1 3.1 L17.2 11 L25.1 19 M8.3 10.6 L16.7 18.2 L8.3 25.8" fill="none" stroke="#ffffff" stroke-width="2.2" stroke-linecap="butt" stroke-linejoin="miter" /></svg>
<svg style="left:194px;top:1926px;" width="32" height="32" viewBox="0 0 16 16"><circle cx="4.6" cy="3.4" r="1.7" fill="none" stroke="#cccccc" stroke-width="1" stroke-linecap="butt" stroke-linejoin="miter" /><circle cx="4.6" cy="12.8" r="1.7" fill="none" stroke="#cccccc" stroke-width="1" stroke-linecap="butt" stroke-linejoin="miter" /><circle cx="11.4" cy="5.6" r="1.7" fill="none" stroke="#cccccc" stroke-width="1" stroke-linecap="butt" stroke-linejoin="miter" /><path d="M4.6 5.1 V11.1 M11.4 7.3 Q11.4 9.4 9.2 9.4 H6.8 Q4.6 9.4 4.6 11.1" fill="none" stroke="#cccccc" stroke-width="1" stroke-linecap="butt" stroke-linejoin="miter" /></svg>
<span style="left:231.40px;top:1918.91px;font-family:'Liberation Sans',sans-serif;font-size:24.29px;line-height:48.58px;color:#cccccc;letter-spacing:0.369px;-webkit-text-stroke:0.35px currentColor;">main*</span>
<svg style="left:306px;top:1927px;" width="32" height="32" viewBox="0 0 16 16"><path d="M2.4 8 A5.6 5.6 0 0 1 12.6 4.9" fill="none" stroke="#cccccc" stroke-width="1" stroke-linecap="butt" stroke-linejoin="miter" /><path d="M13.6 8 A5.6 5.6 0 0 1 3.4 11.1" fill="none" stroke="#cccccc" stroke-width="1" stroke-linecap="butt" stroke-linejoin="miter" /><path d="M10.4 6.8 L13.3 7.9 L14.6 5" fill="none" stroke="#cccccc" stroke-width="1" stroke-linecap="butt" stroke-linejoin="miter" /><path d="M5.6 9.2 L2.7 8.1 L1.4 11" fill="none" stroke="#cccccc" stroke-width="1" stroke-linecap="butt" stroke-linejoin="miter" /></svg>
<svg style="left:366px;top:1925.5px;" width="32" height="32" viewBox="0 0 16 16"><circle cx="8" cy="8" r="5.5" fill="none" stroke="#cccccc" stroke-width="1" stroke-linecap="butt" stroke-linejoin="miter" /><path d="M5.8 5.8 L10.2 10.2 M10.2 5.8 L5.8 10.2" fill="none" stroke="#cccccc" stroke-width="1" stroke-linecap="butt" stroke-linejoin="miter" /></svg>
<span style="left:404.20px;top:1918.91px;font-family:'Liberation Sans',sans-serif;font-size:24.29px;line-height:48.58px;color:#cccccc;-webkit-text-stroke:0.35px currentColor;">0</span>
<svg style="left:423px;top:1924.5px;" width="32" height="32" viewBox="0 0 16 16"><path d="M8 2.6 L13.6 13 H2.4 Z" fill="none" stroke="#cccccc" stroke-width="1" stroke-linecap="butt" stroke-linejoin="miter"  stroke-linejoin="round"/><path d="M8 6.4 V9.8" fill="none" stroke="#cccccc" stroke-width="1.2" stroke-linecap="butt" stroke-linejoin="miter" /><circle cx="8" cy="11.3" r="0.7" fill="#cccccc"/></svg>
<span style="left:461.00px;top:1918.91px;font-family:'Liberation Sans',sans-serif;font-size:24.29px;line-height:48.58px;color:#cccccc;-webkit-text-stroke:0.35px currentColor;">0</span>
<span style="left:2367.40px;top:1918.91px;font-family:'Liberation Sans',sans-serif;font-size:24.29px;line-height:48.58px;color:#cccccc;letter-spacing:0.050px;-webkit-text-stroke:0.35px currentColor;">Ln 1, Col 1</span>
<span style="left:2521.50px;top:1918.91px;font-family:'Liberation Sans',sans-serif;font-size:24.29px;line-height:48.58px;color:#cccccc;letter-spacing:0.262px;-webkit-text-stroke:0.35px currentColor;">Spaces: 4</span>
<span style="left:2666.00px;top:1918.91px;font-family:'Liberation Sans',sans-serif;font-size:24.29px;line-height:48.58px;color:#cccccc;letter-spacing:0.447px;-webkit-text-stroke:0.35px currentColor;">UTF-8</span>
<span style="left:2771.00px;top:1918.91px;font-family:'Liberation Sans',sans-serif;font-size:24.29px;line-height:48.58px;color:#cccccc;transform-origin:0 0;transform:scaleX(0.8916);-webkit-text-stroke:0.35px currentColor;">LF</span>
<svg style="left:2828px;top:1926px;" width="32" height="32" viewBox="0 0 16 16"><path d="M6 1.8 Q4.2 1.8 4.2 3.6 V6 Q4.2 8 2.6 8 Q4.2 8 4.2 10 V12.4 Q4.2 14.2 6 14.2" fill="none" stroke="#cccccc" stroke-width="1" stroke-linecap="butt" stroke-linejoin="miter" /><path d="M10 1.8 Q11.8 1.8 11.8 3.6 V6 Q11.8 8 13.4 8 Q11.8 8 11.8 10 V12.4 Q11.8 14.2 10 14.2" fill="none" stroke="#cccccc" stroke-width="1" stroke-linecap="butt" stroke-linejoin="miter" /></svg>
<span style="left:2870.80px;top:1918.91px;font-family:'Liberation Sans',sans-serif;font-size:24.29px;line-height:48.58px;color:#cccccc;letter-spacing:0.362px;-webkit-text-stroke:0.35px currentColor;">Markdown</span>
<svg style="left:3016px;top:1926px;" width="32" height="32" viewBox="0 0 16 16"><path d="M1.2 9.5 Q1.2 8 2.6 7.6 Q2.2 3.2 5.4 2.7 Q7.6 2.4 8 4 Q8.4 2.4 10.6 2.7 Q13.8 3.2 13.4 7.6 Q14.8 8 14.8 9.5 V11 Q12.5 13.6 8 13.6 Q3.5 13.6 1.2 11 Z" fill="#cccccc"/><rect x="3.7" y="3.9" width="3.4" height="2.9" rx="1.2" fill="#181818"/><rect x="8.9" y="3.9" width="3.4" height="2.9" rx="1.2" fill="#181818"/><path d="M3.6 8.4 H12.4 V11.6 Q10.5 12.5 8 12.5 Q5.5 12.5 3.6 11.6 Z" fill="#181818"/><rect x="6" y="9.2" width="1.2" height="2.1" rx="0.6" fill="#cccccc"/><rect x="8.8" y="9.2" width="1.2" height="2.1" rx="0.6" fill="#cccccc"/></svg>
<svg style="left:3076px;top:1926px;" width="32" height="32" viewBox="0 0 16 16"><path d="M2.6 12.2 H13.4 L12.2 9.6 V6.6 Q12.2 2.4 8 2.4 Q3.8 2.4 3.8 6.6 V9.6 Z" fill="none" stroke="#cccccc" stroke-width="1" stroke-linecap="butt" stroke-linejoin="miter"  stroke-linejoin="round"/><path d="M6.6 12.4 Q6.6 14.2 8 14.2 Q9.4 14.2 9.4 12.4" fill="none" stroke="#cccccc" stroke-width="1" stroke-linecap="butt" stroke-linejoin="miter" /></svg>
</div></div>
<div id="rim"></div>
</body></html>
